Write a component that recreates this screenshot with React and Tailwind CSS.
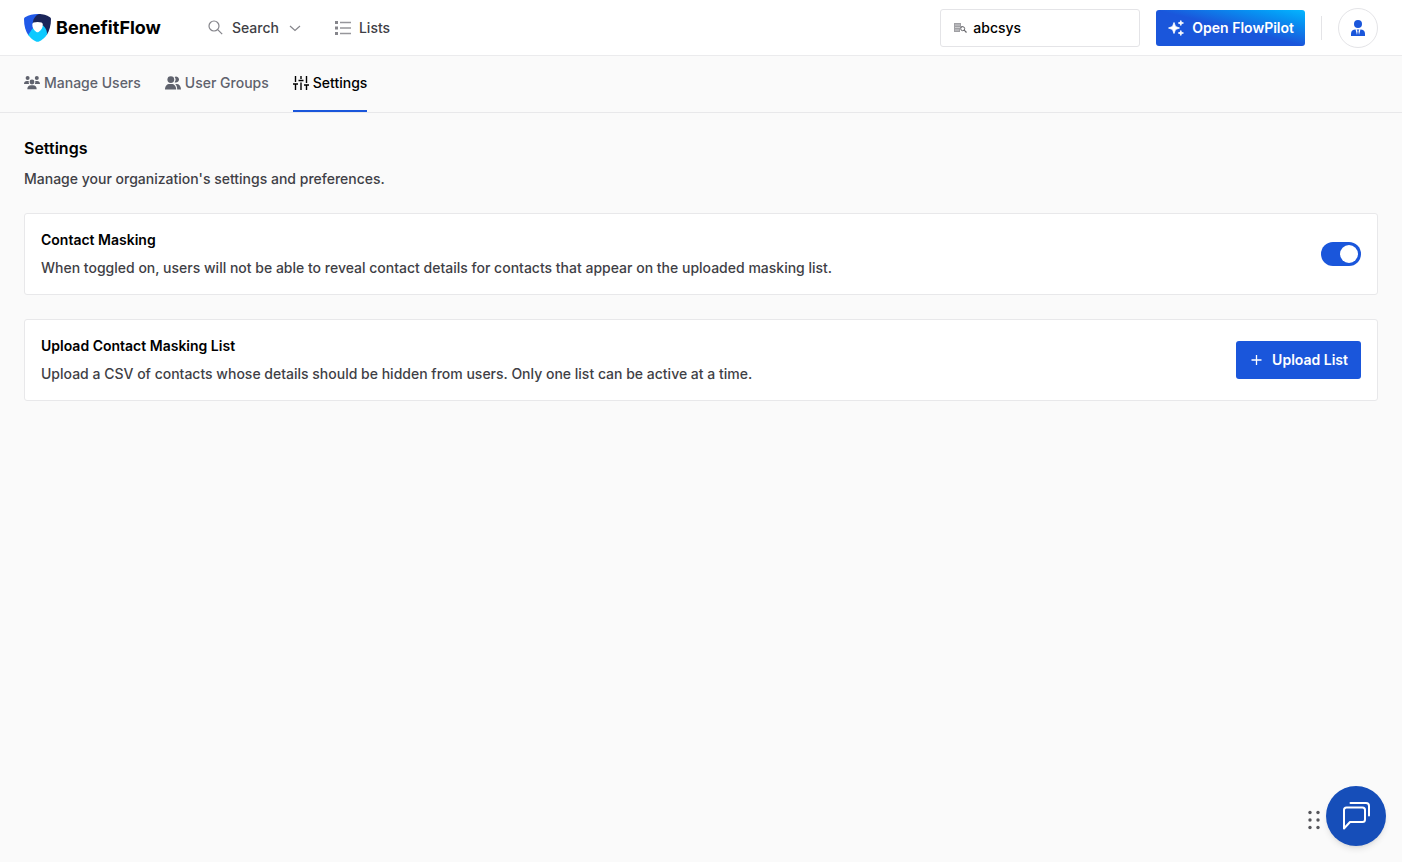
import { useState } from "react";

function Logo() {
  return (
    <svg width="27" height="28" viewBox="0 0 27 28" className="shrink-0" aria-hidden="true">
      <path d="M1 3.2C5 1 9 0 13.5 0H17L14 14L9 15L4.5 21.5C1.5 17 0 12 0 5Q0 3.8 1 3.2Z" fill="#2059e8" />
      <path d="M8.8 10C8.8 5.5 11 1.5 15 0C19 0 22.5 1.2 26 3.2Q27 3.8 27 5C27 11 25.5 16.5 22.8 21L14 18Z" fill="#1b2559" />
      <path d="M4.2 21L8.5 14.5L13 13L19.2 11.5C22 14.5 23.5 17.5 22.9 20.8C20.8 23.8 18 26.3 14.5 27.7Q13.5 28 12.5 27.7C9.2 26.3 6.3 24 4.2 21Z" fill="#0dcaff" />
      <path d="M8.3 10.3Q8.4 9 9.6 8.6C12.2 7.7 15 7.7 17.5 8.6Q18.7 9 18.8 10.3C19 13.7 17.3 16.5 14.6 18Q13.5 18.5 12.4 18C9.8 16.5 8.2 13.7 8.3 10.3Z" fill="#fff" />
    </svg>
  );
}

function SearchIcon() {
  return (
    <svg width="16" height="16" viewBox="0 0 16 16" fill="none" stroke="#85858b" strokeWidth="1.2" aria-hidden="true">
      <circle cx="6" cy="6" r="5" />
      <path d="M9.7 9.7L14.2 14.2" />
    </svg>
  );
}

function ListIcon() {
  return (
    <svg width="16" height="16" viewBox="0 0 16 16" aria-hidden="true">
      <path d="M5 2.5H16M5 8H16M5 13.5H16" stroke="#96969b" strokeWidth="1.3" />
      <path d="M0 1H3V4H0ZM0 6.5H3V9.5H0ZM0 12H3V15H0Z" fill="#85858b" />
    </svg>
  );
}

function CompanyIcon() {
  return (
    <svg width="13" height="12" viewBox="0 0 13 12" className="shrink-0" aria-hidden="true">
      <path d="M0 1H7V4H9V6H6V10H0Z" fill="#a0a0a4" />
      <path d="M1 3H6M1 5.5H6M1 8H5" stroke="#ededee" strokeWidth="0.6" />
      <circle cx="8.7" cy="6.7" r="2" fill="#fff" stroke="#66666b" />
      <path d="M10.2 8.2L12.5 10.5" stroke="#66666b" strokeWidth="1.2" />
    </svg>
  );
}

function SparklesIcon() {
  return (
    <svg width="16" height="16" viewBox="0 0 16 16" fill="white" stroke="white" strokeWidth="0.8" strokeLinejoin="round" aria-hidden="true">
      <path d="M6 2.5L7.5 6.5L11.5 8L7.5 9.5L6 13.5L4.5 9.5L0.5 8L4.5 6.5Z" />
      <path d="M12.8 0.5L13.5 2.3L15.5 3L13.5 3.7L12.8 5.5L12.1 3.7L10.2 3L12.1 2.3ZM12.8 10.5L13.5 12.3L15.5 13L13.5 13.7L12.8 15.5L12.1 13.7L10.2 13L12.1 12.3Z" />
    </svg>
  );
}

function ProfileIcon() {
  return (
    <svg width="16" height="16" viewBox="0 0 16 16" aria-hidden="true">
      <circle cx="8" cy="4" r="4" fill="#1a56db" />
      <path d="M1 16V13.5C1 11 3 9.5 5.5 9.5H10.5C13 9.5 15 11 15 13.5V16Z" fill="#1a56db" />
      <path d="M5.5 9.3L7 15L7.5 11.5L6.9 9.3ZM10.5 9.3L9 15L8.5 11.5L9.1 9.3Z" fill="#fff" />
    </svg>
  );
}

function TeamIcon() {
  return (
    <svg width="16" height="14" viewBox="0 0 16 14" fill="currentColor" aria-hidden="true">
      <circle cx="3.6" cy="2" r="2" />
      <circle cx="12.8" cy="2" r="2" />
      <circle cx="8" cy="6" r="2.4" />
      <path d="M0 8C0 6.2 1.2 5 2.8 5H4.8A3.5 3.5 0 0 0 5.2 8ZM16 8C16 6.2 14.8 5 13.2 5H11.2A3.5 3.5 0 0 1 10.8 8ZM3.3 13.2C3.3 10.8 4.8 9.3 7 9.3H9C11.2 9.3 12.7 10.8 12.7 13.2Z" />
    </svg>
  );
}

function GroupIcon() {
  return (
    <svg width="16" height="14" viewBox="0 0 16 14" fill="currentColor" aria-hidden="true">
      <circle cx="5.8" cy="3.6" r="3.4" />
      <path d="M9.6 0.9A3 3 0 1 1 9.6 6.2A4.3 4.3 0 0 0 9.6 0.9ZM0 13.5C0 10 2 8 4.6 8H6.6C9 8 11.2 10 11.2 13.5ZM10.2 8H11.5C14.2 8 16 10 16 13.5H12.2C12.2 11.2 11.6 9.3 10.2 8Z" />
    </svg>
  );
}

function SlidersIcon() {
  return (
    <svg width="16" height="14" viewBox="0 0 16 14" fill="none" stroke="currentColor" strokeWidth="1.4" aria-hidden="true">
      <path d="M2.5 0V6M0 8H5M2.5 8V14M8 0V3M5.5 4.5H10.5M8 6.5V14M13.5 0V7M11 9H16M13.5 9V14" />
    </svg>
  );
}

function ChatIcon() {
  return (
    <svg width="28" height="28" viewBox="0 0 28 28" fill="none" stroke="white" strokeWidth="2" strokeLinejoin="round" strokeLinecap="round" aria-hidden="true">
      <path d="M2 26.5V8C2 6.3 3.3 5.5 4.5 5.5H20.5C22 5.5 23 6.5 23 8V17.5C23 19 22 20 20.5 20H8Z" />
      <path d="M8.5 1H24C26 1 27 2 27 4V13.5" />
    </svg>
  );
}

const tabs = [
  { label: "Manage Users", icon: TeamIcon },
  { label: "User Groups", icon: GroupIcon },
  { label: "Settings", icon: SlidersIcon, active: true },
];

function SettingCard({ title, description, children }) {
  return (
    <section className="flex items-center justify-between gap-4 rounded-[3px] border border-[#e8e8ea] bg-white p-4">
      <div>
        <h2 className="text-sm font-semibold text-black leading-5">{title}</h2>
        <p className="mt-2 text-sm font-medium text-[#3f3f46] leading-5">{description}</p>
      </div>
      {children}
    </section>
  );
}

export default function App() {
  const [masking, setMasking] = useState(true);
  const [company, setCompany] = useState("abcsys");

  return (
    <div className="min-h-screen bg-[#fafafa] font-[Inter,sans-serif] text-sm font-medium text-[#3f3f46]">
      <header className="flex h-14 items-center justify-between border-b border-[#ebebed] bg-white px-6">
        <div className="flex items-center">
          <a href="#" className="flex items-center gap-[5px] text-lg font-bold text-black">
            <Logo />
            BenefitFlow
          </a>
          <nav className="ml-[47px] flex items-center gap-8">
            <button className="flex items-center gap-2">
              <SearchIcon />
              Search
              <svg width="16" height="16" viewBox="0 0 16 16" fill="none" stroke="#85858b" strokeWidth="1.2" aria-hidden="true">
                <path d="M3 6L8 10.5L13 6" />
              </svg>
            </button>
            <a href="#lists" className="flex items-center gap-2">
              <ListIcon />
              Lists
            </a>
          </nav>
        </div>

        <div className="flex items-center gap-4">
          <label className="flex h-[38px] w-[200px] items-center gap-1.5 rounded-[3px] border border-[#e4e4e7] px-[13px]">
            <CompanyIcon />
            <input
              aria-label="Company search"
              value={company}
              onChange={(e) => setCompany(e.target.value)}
              className="w-full min-w-0 text-sm font-medium text-black outline-none"
            />
          </label>
          <button className="flex h-9 items-center gap-2 rounded-[3px] bg-linear-to-tr from-[#1a56db] from-50% to-[#06b6ff] pl-3 pr-[11px] font-semibold text-white">
            <SparklesIcon />
            Open FlowPilot
          </button>
          <div className="h-6 w-px bg-[#e4e4e7]" />
          <button aria-label="Account" className="flex size-10 items-center justify-center rounded-full border border-[#e4e4e7]">
            <ProfileIcon />
          </button>
        </div>
      </header>

      <nav className="flex h-[57px] gap-6 border-b border-[#e8e8ea] px-6 text-[#5f626d]">
        {tabs.map(({ label, icon: Icon, active }) => (
          <a
            key={label}
            href="#"
            className={`flex items-center gap-1 border-b-2 ${active ? "border-[#1a56db] text-black" : "border-transparent"}`}
          >
            <Icon />
            {label}
          </a>
        ))}
      </nav>

      <main className="px-6 pt-[23px] pb-6">
        <h1 className="text-base font-semibold text-black leading-6">Settings</h1>
        <p className="mt-[9px] leading-5">Manage your organization's settings and preferences.</p>

        <div className="mt-6 flex flex-col gap-6">
          <SettingCard
            title="Contact Masking"
            description="When toggled on, users will not be able to reveal contact details for contacts that appear on the uploaded masking list."
          >
            <input
              type="checkbox"
              role="switch"
              aria-label="Contact Masking"
              checked={masking}
              onChange={(e) => setMasking(e.target.checked)}
              className="flex h-6 w-10 shrink-0 appearance-none items-center rounded-full bg-zinc-300 px-[3px] before:size-[18px] before:rounded-full before:bg-white before:content-[''] checked:justify-end checked:bg-[#1a56db]"
            />
          </SettingCard>
          <SettingCard
            title="Upload Contact Masking List"
            description="Upload a CSV of contacts whose details should be hidden from users. Only one list can be active at a time."
          >
            <button className="flex h-[38px] shrink-0 items-center gap-2 rounded-[3px] bg-[#1a56db] pl-3 pr-[13px] font-semibold text-white">
              <svg width="16" height="16" viewBox="0 0 16 16" stroke="white" strokeWidth="1.3" aria-hidden="true">
                <path d="M8.5 3V13M3.5 8H13.5" />
              </svg>
              Upload List
            </button>
          </SettingCard>
        </div>
      </main>

      <div className="fixed right-4 bottom-4 flex items-center gap-1.5">
        <button aria-label="Move chat" className="mt-2">
          <svg width="12" height="20" viewBox="0 0 12 20" fill="#55555a" aria-hidden="true">
            <circle cx="2" cy="2.5" r="1.7" />
            <circle cx="10" cy="2.5" r="1.7" />
            <circle cx="2" cy="10" r="1.7" />
            <circle cx="10" cy="10" r="1.7" />
            <circle cx="2" cy="17.5" r="1.7" />
            <circle cx="10" cy="17.5" r="1.7" />
          </svg>
        </button>
        <button aria-label="Open chat" className="flex size-[60px] items-center justify-center rounded-full bg-[#164eb9] shadow-md">
          <ChatIcon />
        </button>
      </div>
    </div>
  );
}
